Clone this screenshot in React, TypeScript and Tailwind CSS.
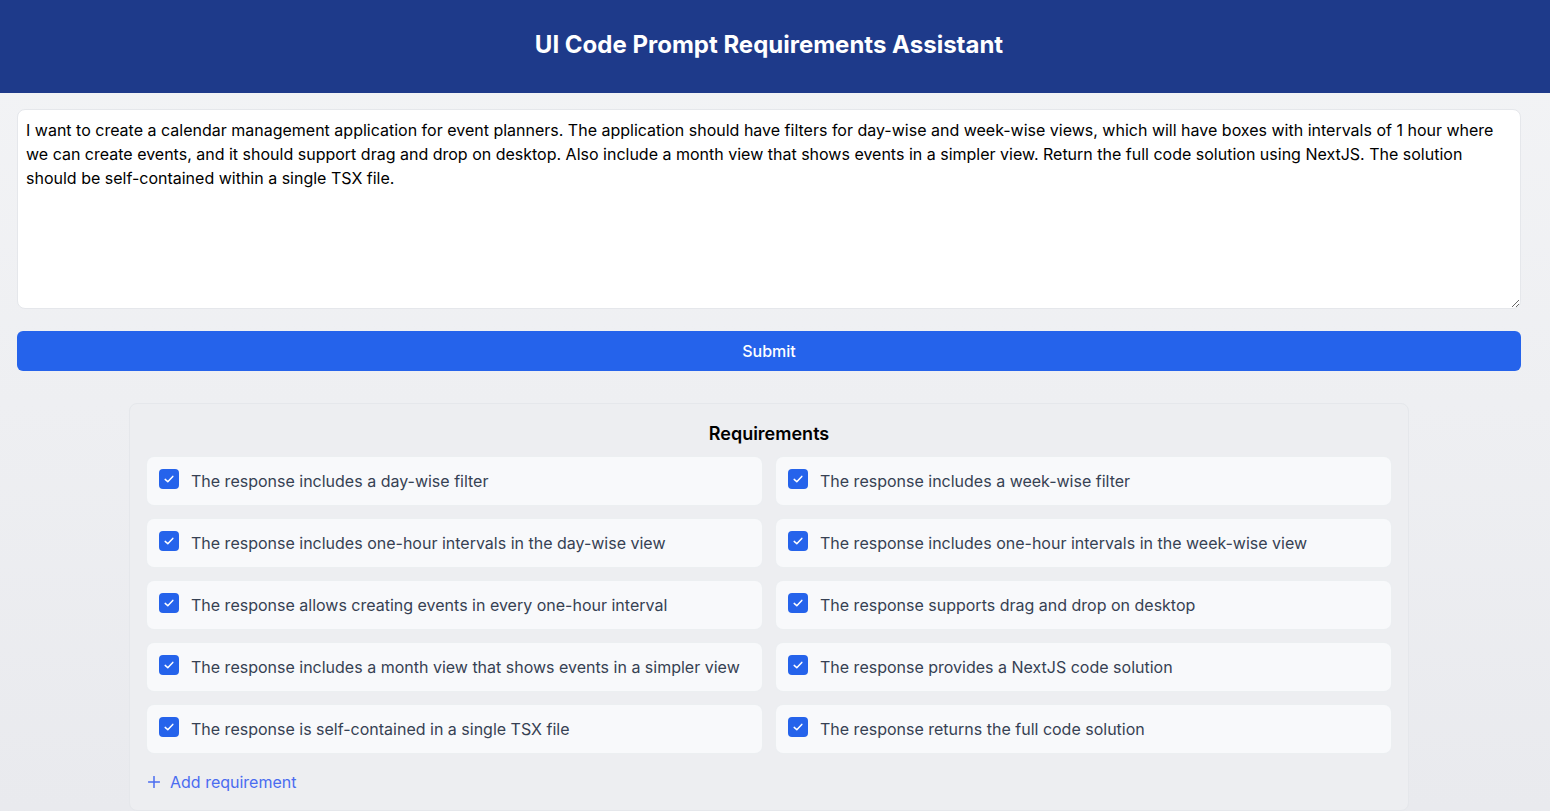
import { useState } from "react";

const initial = [
    "The response includes a day-wise filter",
    "The response includes a week-wise filter",
    "The response includes one-hour intervals in the day-wise view",
    "The response includes one-hour intervals in the week-wise view",
    "The response allows creating events in every one-hour interval",
    "The response supports drag and drop on desktop",
    "The response includes a month view that shows events in a simpler view",
    "The response provides a NextJS code solution",
    "The response is self-contained in a single TSX file",
    "The response returns the full code solution",
];

const prompt =
    "I want to create a calendar management application for event planners. The application should have filters for day-wise and week-wise views, which will have boxes with intervals of 1 hour where we can create events, and it should support drag and drop on desktop. Also include a month view that shows events in a simpler view. Return the full code solution using NextJS. The solution should be self-contained within a single TSX file.";

const Check = ({ checked, onClick }: { checked: boolean; onClick: () => void }) => (
    <button
        onClick={onClick}
        className={`w-5 h-5 shrink-0 rounded flex items-center justify-center ${checked ? "bg-[#2563eb]" : "bg-white border border-gray-400"}`}
    >
        {checked && (
            <svg width="12" height="12" viewBox="0 0 12 12" fill="none">
                <path d="M2.2 6.4 L4.8 8.8 L9.8 3.4" stroke="white" strokeWidth="1.5" strokeLinecap="round" strokeLinejoin="round" />
            </svg>
        )}
    </button>
);

export default function App() {
    const [text, setText] = useState(prompt);
    const [checks, setChecks] = useState(initial.map(() => true));

    const toggle = (i: number) => setChecks((c) => c.map((v, j) => (j === i ? !v : v)));

    return (
        <div className="min-h-screen bg-gradient-to-b from-[#f3f4f6] to-[#e9eaee] font-['Inter',sans-serif]">
            <header className="bg-[#1e3a8a] h-[93px]">
                <div className="w-[1538px] h-full flex items-center justify-center pb-1">
                    <h1 className="text-white text-2xl font-bold">UI Code Prompt Requirements Assistant</h1>
                </div>
            </header>

            <main className="w-[1538px] px-[17px] pt-4">
                <textarea
                    value={text}
                    onChange={(e) => setText(e.target.value)}
                    className="block w-full h-[200px] bg-white border border-gray-200 rounded-lg px-2 py-2 text-base leading-6 text-black outline-none"
                />
                <button className="mt-[22px] w-full h-10 bg-[#2563eb] text-white rounded-md font-medium">
                    Submit
                </button>

                <div className="mt-8 mx-auto w-[1280px] border border-gray-200 rounded-lg bg-[#edeef1] p-4">
                    <h2 className="text-center text-lg font-semibold text-black mb-2">Requirements</h2>
                    <div className="grid grid-cols-2 gap-3">
                        {initial.map((r, i) => (
                            <div key={r} className="flex items-start gap-3 bg-[#f8f9fb] border border-gray-200/60 rounded-lg p-3">
                                <Check checked={checks[i]} onClick={() => toggle(i)} />
                                <span className="text-base leading-6 text-gray-700">{r}</span>
                            </div>
                        ))}
                    </div>
                    <button className="mt-4 ml-0.5 flex items-center gap-2.5 text-[#4a6cf0] text-base">
                        <svg width="12" height="12" viewBox="0 0 12 12" fill="none">
                            <path d="M6 0.5v11M0.5 6h11" stroke="currentColor" strokeWidth="1.5" strokeLinecap="round" />
                        </svg>
                        Add requirement
                    </button>
                </div>
            </main>
        </div>
    );
}
